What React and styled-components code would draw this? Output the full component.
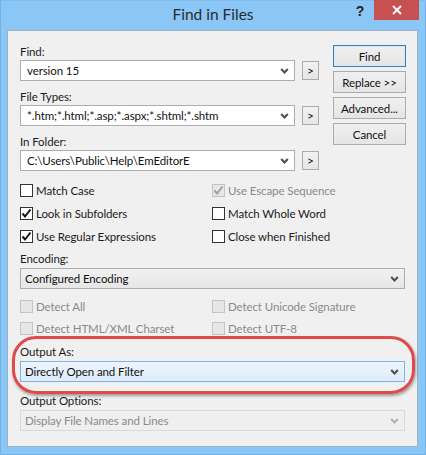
import React from "react";
import styled, { createGlobalStyle, css } from "styled-components";

const Global = createGlobalStyle`
  html, body { margin: 0; padding: 0; background: #8ac6f6; }
  body { font-family: "Lato", "Liberation Sans", sans-serif; }
`;

const Window = styled.div`
  width: 426px;
  height: 455px;
  box-sizing: border-box;
  background: #8ac6f6;
  border: 1px solid #74b1e6;
  border-top-color: #80bcee;
  display: flex;
  flex-direction: column;
`;

const TitleBar = styled.div`
  height: 29px;
  display: grid;
  grid-template-columns: 1fr auto 1fr;
  align-items: start;
`;

const Title = styled.div`
  grid-column: 2;
  padding-top: 4px;
  font-family: "Lato", "Liberation Sans", sans-serif;
  font-size: 15.5px;
  color: #2b2b2b;
`;

const Controls = styled.div`
  grid-column: 3;
  justify-self: end;
  display: flex;
  align-items: flex-start;
  margin-right: 6px;
`;

const HelpGlyph = styled.div`
  width: 16px;
  margin-right: 6px;
  padding-top: 2px;
  text-align: center;
  font-family: "Liberation Sans", sans-serif;
  font-weight: bold;
  font-size: 14px;
  color: #222;
`;

const CloseButton = styled.div`
  width: 45px;
  height: 20px;
  margin-top: -1px;
  background: #c75050;
  display: flex;
  align-items: center;
  justify-content: center;
`;

const Panel = styled.div`
  margin: 0 7px 0 6px;
  height: 417px;
  box-sizing: border-box;
  background: #f0f0f0;
  border: 1px solid #9fb0c0;
  padding: 13px 12px 0 12px;
  font-size: 11.5px;
  letter-spacing: -0.1px;
  color: #1b1b1b;
`;

const Top = styled.div`
  display: grid;
  grid-template-columns: 299px 73px;
  column-gap: 14px;
`;

const Fields = styled.div`
  display: flex;
  flex-direction: column;
  gap: 8px;
`;

const Field = styled.div`
  display: flex;
  flex-direction: column;
`;

const Label = styled.div`
  height: 16px;
  line-height: 16px;
  color: ${(p) => (p.$disabled ? "#8a8a8a" : "#1b1b1b")};
  margin-top: ${(p) => p.$mt || 0}px;
  margin-bottom: ${(p) => p.$mb || 0}px;
`;

const ComboRow = styled.div`
  display: flex;
  align-items: center;
  gap: 7px;
`;

const Combo = styled.div`
  box-sizing: border-box;
  height: 21px;
  width: ${(p) => (p.$w ? `${p.$w}px` : "100%")};
  display: flex;
  align-items: center;
  justify-content: space-between;
  padding: 0 5px 0 ${(p) => (p.$editable ? 6 : 4)}px;
  border: 1px solid #abadb3;
  background: #fff;
  color: #111;
  ${(p) =>
    p.$variant === "list" &&
    css`
      border-color: #acacac;
      background: linear-gradient(#f2f2f2, #e6e6e6);
    `}
  ${(p) =>
    p.$variant === "hot" &&
    css`
      border-color: #7eb4ea;
      background: linear-gradient(#edf5fd, #dcecfc);
    `}
  ${(p) =>
    p.$variant === "disabled" &&
    css`
      border-color: #d9d9d9;
      background: #efefef;
      color: #8a8a8a;
    `}
`;

const Chevron = ({ color = "#4d4d4d" }) => (
  <svg width="9" height="6" viewBox="0 0 9 6">
    <path d="M1.2 1 L4.5 4.5 L7.8 1" fill="none" stroke={color} strokeWidth="2" />
  </svg>
);

const Arrow = styled.div`
  box-sizing: border-box;
  width: 17px;
  height: 19px;
  border: 1px solid #acacac;
  background: linear-gradient(#f2f2f2, #e5e5e5);
  display: flex;
  align-items: center;
  justify-content: center;
  font-size: 12px;
  color: #111;
  line-height: 1;
`;

const Buttons = styled.div`
  display: flex;
  flex-direction: column;
  gap: 4px;
  padding-top: 1px;
`;

const Button = styled.div`
  box-sizing: border-box;
  height: 22px;
  display: flex;
  align-items: center;
  justify-content: center;
  border: 1px solid ${(p) => (p.$default ? "#3c7fb1" : "#acacac")};
  background: linear-gradient(#f0f0f0, #e5e5e5);
  ${(p) => p.$default && css`box-shadow: inset 0 0 0 1px #d6e8f7;`}
  color: #111;
`;

const Checks = styled.div`
  display: grid;
  grid-template-columns: 192px 1fr;
  grid-auto-rows: ${(p) => p.$row || 23}px;
  margin-top: ${(p) => p.$mt || 0}px;
`;

const CheckItem = styled.div`
  display: flex;
  align-items: center;
  gap: 3px;
  color: ${(p) => (p.$disabled ? "#8a8a8a" : "#1b1b1b")};
`;

const Box = styled.div`
  box-sizing: border-box;
  width: 13px;
  height: 13px;
  border: 1px solid ${(p) => (p.$disabled ? "#c4c4c4" : "#333")};
  background: ${(p) => (p.$disabled ? "#e6e6e6" : "#fff")};
  display: flex;
  align-items: center;
  justify-content: center;
`;

const Check = ({ checked, disabled, children }) => (
  <CheckItem $disabled={disabled}>
    <Box $disabled={disabled}>
      {checked && (
        <svg width="11" height="11" viewBox="0 0 11 11">
          <path
            d="M1.5 5.5 L4 8.5 L9.5 1.5"
            fill="none"
            stroke={disabled ? "#a0a0a0" : "#111"}
            strokeWidth="2"
          />
        </svg>
      )}
    </Box>
    <span>{children}</span>
  </CheckItem>
);

const Highlight = styled.div`
  position: relative;
  margin-top: 5px;
  &::before {
    content: "";
    position: absolute;
    top: -8px;
    left: -8px;
    right: -10px;
    bottom: -12px;
    border: 3px solid #e04a4a;
    border-radius: 24px;
    box-shadow: 1px 2px 3px rgba(0, 0, 0, 0.35);
    pointer-events: none;
  }
`;

export default function App() {
  return (
    <>
      <Global />
      <Window>
        <TitleBar>
          <Title>Find in Files</Title>
          <Controls>
            <HelpGlyph>?</HelpGlyph>
            <CloseButton>
              <svg width="10" height="10" viewBox="0 0 10 10">
                <path d="M1 1 L9 9 M9 1 L1 9" stroke="#fff" strokeWidth="2" />
              </svg>
            </CloseButton>
          </Controls>
        </TitleBar>
        <Panel>
          <Top>
            <Fields>
              <Field>
                <Label>Find:</Label>
                <ComboRow>
                  <Combo $w={277} $editable>
                    <span>version 15</span>
                    <Chevron />
                  </Combo>
                  <Arrow>&gt;</Arrow>
                </ComboRow>
              </Field>
              <Field>
                <Label>File Types:</Label>
                <ComboRow>
                  <Combo $w={277} $editable>
                    <span>*.htm;*.html;*.asp;*.aspx;*.shtml;*.shtm</span>
                    <Chevron />
                  </Combo>
                  <Arrow>&gt;</Arrow>
                </ComboRow>
              </Field>
              <Field>
                <Label>In Folder:</Label>
                <ComboRow>
                  <Combo $w={277} $editable>
                    <span>C:\Users\Public\Help\EmEditorE</span>
                    <Chevron />
                  </Combo>
                  <Arrow>&gt;</Arrow>
                </ComboRow>
              </Field>
            </Fields>
            <Buttons>
              <Button $default>Find</Button>
              <Button>Replace &gt;&gt;</Button>
              <Button>Advanced...</Button>
              <Button>Cancel</Button>
            </Buttons>
          </Top>

          <Checks $mt={8}>
            <Check>Match Case</Check>
            <Check checked disabled>Use Escape Sequence</Check>
            <Check checked>Look in Subfolders</Check>
            <Check>Match Whole Word</Check>
            <Check checked>Use Regular Expressions</Check>
            <Check>Close when Finished</Check>
          </Checks>

          <Label $mt={3} $mb={1}>Encoding:</Label>
          <Combo $variant="list">
            <span>Configured Encoding</span>
            <Chevron />
          </Combo>

          <Checks $mt={6} $row={22}>
            <Check disabled>Detect All</Check>
            <Check disabled>Detect Unicode Signature</Check>
            <Check disabled>Detect HTML/XML Charset</Check>
            <Check disabled>Detect UTF-8</Check>
          </Checks>

          <Highlight>
            <Label $mb={1}>Output As:</Label>
            <Combo $variant="hot">
              <span>Directly Open and Filter</span>
              <Chevron />
            </Combo>
          </Highlight>

          <Label $mt={11} $mb={1}>Output Options:</Label>
          <Combo $variant="disabled">
            <span>Display File Names and Lines</span>
            <Chevron color="#b0b0b0" />
          </Combo>
        </Panel>
      </Window>
    </>
  );
}
